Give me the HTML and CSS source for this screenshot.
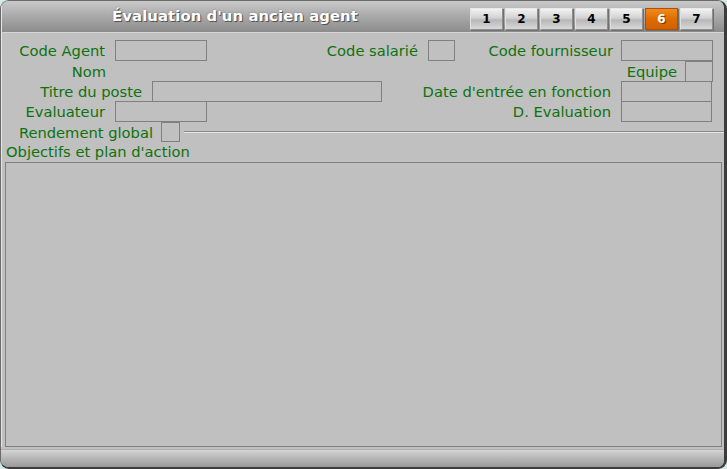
FILE: index.html
```html
<!DOCTYPE html>
<html lang="fr">
<head>
<meta charset="utf-8">
<title>Évaluation d'un ancien agent</title>
<link rel="stylesheet" href="styles.css">
</head>
<body>
<div class="window">
  <div class="titlebar">
    <div class="title">Évaluation d'un ancien agent</div>
    <div class="tabs">
      <span class="tab">1</span>
      <span class="tab">2</span>
      <span class="tab">3</span>
      <span class="tab">4</span>
      <span class="tab">5</span>
      <span class="tab active">6</span>
      <span class="tab">7</span>
    </div>
  </div>
  <div class="content">
    <div class="row r1">
      <span class="lbl w-a">Code Agent</span><span class="box w92"></span>
      <span class="lbl w-b">Code salarié</span><span class="box w27"></span>
      <span class="lbl w-c">Code fournisseur</span><span class="box w92"></span>
    </div>
    <div class="row r2">
      <span class="lbl w-nom">Nom</span>
      <span class="lbl w-eq">Equipe</span><span class="box w28"></span>
    </div>
    <div class="row r3">
      <span class="lbl w-titre">Titre du poste</span><span class="box w230"></span>
      <span class="lbl w-date">Date d'entrée en fonction</span><span class="box w91"></span>
    </div>
    <div class="row r4">
      <span class="lbl w-a">Evaluateur</span><span class="box w92"></span>
      <span class="lbl w-deval">D. Evaluation</span><span class="box w91"></span>
    </div>
    <div class="row r5">
      <span class="lbl w-rend">Rendement global</span><span class="box w19"></span>
      <span class="sep"></span>
    </div>
    <div class="obj-label">Objectifs et plan d'action</div>
    <div class="textarea"></div>
  </div>
  <div class="footer"></div>
</div>
</body>
</html>
```

FILE: styles.css
```css
html, body {
  margin: 0;
  padding: 0;
  background: #d2ebe7;
}
.window {
  position: relative;
  width: 727px;
  height: 469px;
  box-sizing: border-box;
  border: 1px solid #3c3c3c;
  border-left-color: #6a6a6a;
  border-top-color: #6a6a6a;
  border-right-width: 3px;
  border-bottom-width: 2px;
  border-radius: 9px;
  background: #c0c0c0;
  overflow: hidden;
  display: flex;
  flex-direction: column;
  font-family: "DejaVu Sans", Verdana, sans-serif;
}
.titlebar {
  height: 31px;
  flex: none;
  display: flex;
  align-items: center;
  background: linear-gradient(#c9c9c9, #a9a9a9 50%, #8c8c8c);
  border-bottom: 1px solid #d6d6d6;
  box-shadow: inset 1px 0 0 #e6e6e6;
}
.title {
  width: 468px;
  text-align: center;
  color: #ffffff;
  font-weight: bold;
  font-size: 14.8px;
  letter-spacing: 0.1px;
  text-shadow: 1px 1px 0 #555, 0 0 2px #777;
  margin-top: -2px;
}
.tabs {
  display: flex;
  gap: 2px;
  margin-left: 1px;
  margin-top: 5px;
}
.tab {
  width: 33px;
  height: 22px;
  box-sizing: border-box;
  display: flex;
  align-items: center;
  justify-content: center;
  font-family: "DejaVu Sans", Verdana, sans-serif;
  font-weight: bold;
  font-size: 12px;
  color: #000;
  background: linear-gradient(#f2f2f2, #d2d2d2 45%, #b8b8b8 55%, #d8d8d8);
  border: 1px solid #8e8e8e;
  border-top-color: #e8e8e8;
  border-left-color: #e0e0e0;
  box-shadow: 1px 1px 0 #707070;
}
.tab.active {
  color: #fff;
  background: linear-gradient(#f08a1c, #e06c00 50%, #d06000);
  border-color: #b05000;
  text-shadow: 1px 1px 0 #7a3a00;
}
.content {
  flex: 1;
  padding-top: 7px;
  box-shadow: inset 1px 0 0 #e6e6e6;
}
.row {
  display: flex;
  align-items: center;
  height: 20px;
  font-size: 14.7px;
  color: #0e720e;
}
.r1 { height: 21px; }
.r4 { height: 21px; }
.r5 { height: 20px; }
.lbl {
  text-align: right;
  padding-right: 10px;
  box-sizing: border-box;
  white-space: nowrap;
  flex: none;
}
.box {
  flex: none;
  height: 21px;
  box-sizing: border-box;
  border: 1px solid #808080;
  background: #c0c0c0;
}
.w-a { width: 114px; }
.w-b { width: 221px; }
.w-c { width: 166px; padding-right: 8px; }
.w-nom { width: 105px; padding-right: 0; }
.w-eq { width: 579px; padding-right: 8px; }
.w-titre { width: 151px; }
.w-date { width: 239px; }
.w-deval { width: 414px; }
.w-rend { width: 160px; padding-right: 8px; }
.w92 { width: 92px; }
.w91 { width: 91px; }
.w27 { width: 27px; }
.w28 { width: 28px; }
.w19 { width: 19px; height: 20px; }
.w230 { width: 230px; }
.sep {
  flex: 1;
  margin-left: 4px;
  height: 0;
  border-top: 1px solid #8c8c8c;
  border-bottom: 1px solid #e4e4e4;
}
.obj-label {
  font-size: 14.7px;
  color: #0e720e;
  padding-left: 5px;
  height: 20px;
  line-height: 20px;
}
.textarea {
  margin-left: 4px;
  margin-right: 2px;
  height: 285px;
  box-sizing: border-box;
  border: 1px solid #808080;
  background: #c0c0c0;
}
.footer {
  flex: none;
  height: 18px;
  margin-top: 2px;
  background: linear-gradient(#d4d4d4, #b4b4b4 50%, #969696);
  border-top: 1px solid #b0b0b0;
}
```
